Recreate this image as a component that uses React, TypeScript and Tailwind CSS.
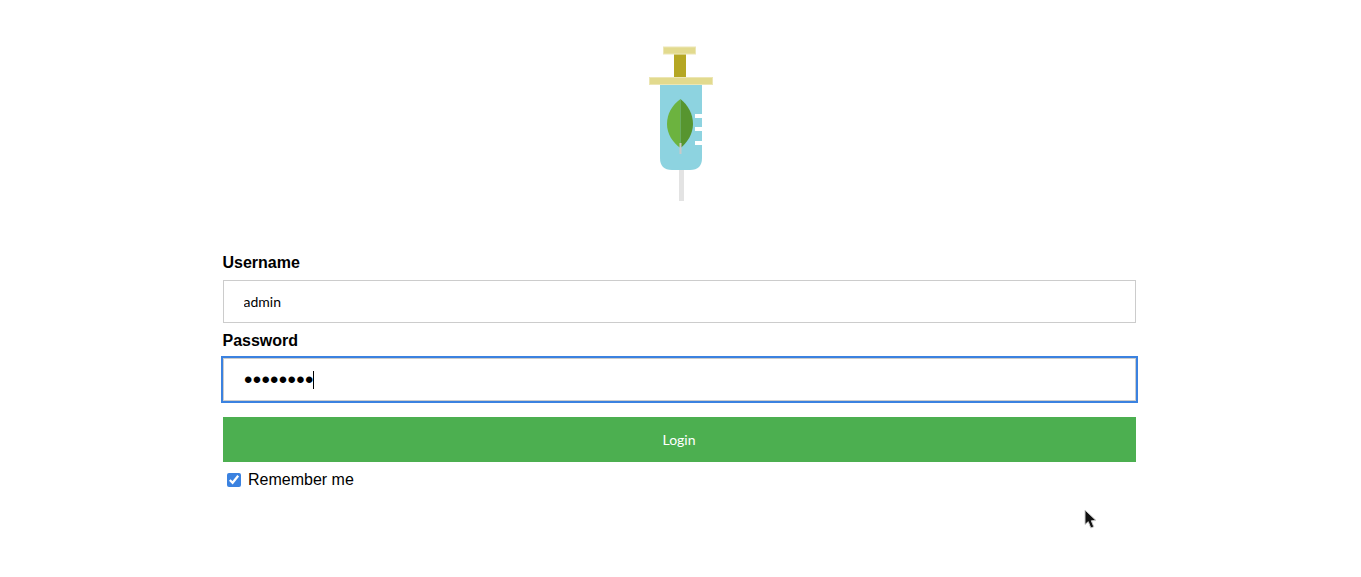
import React from 'react';

const labelClass = "block text-base leading-[18px] font-bold text-black";

const Logo: React.FC = () => (
    <svg width="66" height="156" viewBox="0 0 66 156" className="block">
        <rect x="15.500" y="1" width="32" height="7" fill="#e2da8e" stroke="#ece6b4" />
        <rect x="26" y="8.500" width="12" height="23" fill="#b5a723" />
        <rect x="1.500" y="31.500" width="63" height="7" fill="#e2da8e" stroke="#ece6b4" />
        <rect x="31" y="124" width="5" height="31" fill="#e3e3e3" />
        <path d="M12 39H54V112Q54 124 42 124H24Q12 124 12 112Z" fill="#8dd3e0" />
        <rect x="47" y="68" width="7" height="4" fill="#fff" />
        <rect x="47" y="81" width="7" height="4" fill="#fff" />
        <rect x="47" y="95" width="7" height="4" fill="#fff" />
        <path d="M32.500 53C24 59 19 68 19 78C19 88 25 97 32.500 102Z" fill="#6cb33f" />
        <path d="M32.500 53C40 59 45 68 45 78C45 88 39 97 32.500 102Z" fill="#57952f" />
        <rect x="31.500" y="97" width="2" height="11" fill="#c9c9c9" />
    </svg>
);

const Cursor: React.FC = () => (
    <svg width="16" height="22" viewBox="0 0 16 22" className="absolute left-[1083px] top-[509px]">
        <path d="M2 1V15.500L5.300 12.700L7.800 19L10.800 17.800L8.300 11.800L13 11.500Z" fill="#111" stroke="#ccc" strokeWidth="1" />
    </svg>
);

export default function App() {
    return (
        <div className="relative h-[577px] bg-white overflow-hidden font-['Liberation_Sans',sans-serif]">
            <div className="flex justify-center pt-[46px] pl-[1px]">
                <Logo />
            </div>
            <form className="w-[913px] ml-[223px] mt-[52px]">
                <label className={`${labelClass} -ml-[0.5px] mt-[1px] mb-[8px]`}>Username</label>
                <input
                    type="text"
                    readOnly
                    value="admin"
                    className="block w-full h-[43px] pl-[19.5px] pr-5 border border-[#ccc] bg-white text-[14px] text-black outline-none font-['Lato',sans-serif]"
                />
                <label className={`${labelClass} -ml-[0.5px] mt-[9px] mb-[8px]`}>Password</label>
                <div className="relative">
                    <input
                        type="password"
                        readOnly
                        value="password"
                        className="block w-full h-[43px] px-5 border border-[#ccc] bg-white text-[24px] tracking-[0.3px] text-black outline-2 outline-[#3b82e0] font-['Liberation_Sans',sans-serif]"
                    />
                    <span className="absolute left-[90px] top-[13px] w-[1px] h-[18px] bg-black" />
                </div>
                <button
                    type="button"
                    className="block w-full h-[45px] mt-[16px] bg-[#4caf50] text-[14px] text-white font-['Lato',sans-serif] text-center pr-[1px]"
                >
                    Login
                </button>
                <label className="flex items-center h-[18px] mt-[9px] pl-[4px] text-base leading-[18px] text-black">
                    <input type="checkbox" checked readOnly className="w-[14px] h-[14px] m-0 accent-[#3b82e0]" />
                    <span className="ml-[7px]">Remember me</span>
                </label>
            </form>
            <Cursor />
        </div>
    );
}
